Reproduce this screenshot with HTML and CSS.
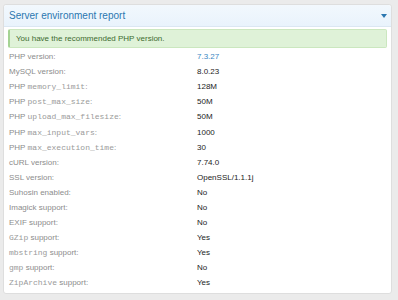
FILE: index.html
```html
<!doctype html>
<html lang="en">
  <head>
    <meta charset="UTF-8" />
    <title>Server environment report</title>
    <link rel="stylesheet" href="styles.css">
  </head>
  <body>
    <div class="block">
      <div class="block-header">
        <h2>Server environment report</h2>
        <span class="caret"></span>
      </div>

      <div class="block-body">
        <div class="message success">You have the recommended PHP version.</div>

        <dl class="pairs">
          <dt>PHP version:</dt><dd><a href="#">7.3.27</a></dd>
          <dt>MySQL version:</dt><dd>8.0.23</dd>
          <dt>PHP <code>memory_limit</code>:</dt><dd>128M</dd>
          <dt>PHP <code>post_max_size</code>:</dt><dd>50M</dd>
          <dt>PHP <code>upload_max_filesize</code>:</dt><dd>50M</dd>
          <dt>PHP <code>max_input_vars</code>:</dt><dd>1000</dd>
          <dt>PHP <code>max_execution_time</code>:</dt><dd>30</dd>
          <dt>cURL version:</dt><dd>7.74.0</dd>
          <dt>SSL version:</dt><dd>OpenSSL/1.1.1j</dd>
          <dt>Suhosin enabled:</dt><dd>No</dd>
          <dt>Imagick support:</dt><dd>No</dd>
          <dt>EXIF support:</dt><dd>No</dd>
          <dt><code>GZip</code> support:</dt><dd>Yes</dd>
          <dt><code>mbstring</code> support:</dt><dd>Yes</dd>
          <dt><code>gmp</code> support:</dt><dd>No</dd>
          <dt><code>ZipArchive</code> support:</dt><dd>Yes</dd>
        </dl>
      </div>
    </div>
  </body>
</html>
```

FILE: styles.css
```css
* {
  margin: 0;
  padding: 0;
  box-sizing: border-box;
}

body {
  font-family: "Liberation Sans", Arial, sans-serif;
  font-size: 8px;
  background: #ebebeb;
  padding: 4px 6px 0 3px;
}

.block {
  background: white;
  border: 1px solid #dedede;
  border-radius: 3px;
  height: 290px;
}

.block-header {
  display: flex;
  align-items: center;
  justify-content: space-between;
  height: 22px;
  padding: 0 4px 0 5px;
  background: linear-gradient(to bottom, #f2f8fd 0%, #e9f3fc 100%);
  border-bottom: 1px solid #dbe7f2;
  border-radius: 3px 3px 0 0;
}

.block-header h2 {
  font-size: 10px;
  font-weight: normal;
  color: #2b77b0;
}

.caret {
  width: 0;
  height: 0;
  border-left: 3px solid transparent;
  border-right: 3px solid transparent;
  border-top: 4px solid #2b77b0;
}

.block-body {
  padding: 2px 4px 0;
}

.message {
  height: 19px;
  display: flex;
  align-items: center;
  padding-left: 6px;
  border-radius: 2px;
}

.success {
  background: #dff2d8;
  border: 1px solid #cbe7bf;
  border-left: 2px solid #a5d394;
  color: #3d6b30;
}

.pairs {
  display: grid;
  grid-template-columns: 188px 1fr;
  grid-auto-rows: 15.1px;
  align-items: center;
  margin-top: 1px;
  padding-left: 1px;
}

.pairs dt {
  color: #8c8c8c;
}

.pairs dd {
  color: #1c1c1c;
}

.pairs code {
  font-family: "Liberation Mono", "Courier New", monospace;
  font-size: 8px;
  color: #9a9a9a;
}

.pairs a {
  color: #3a87c3;
  text-decoration: none;
}
```
